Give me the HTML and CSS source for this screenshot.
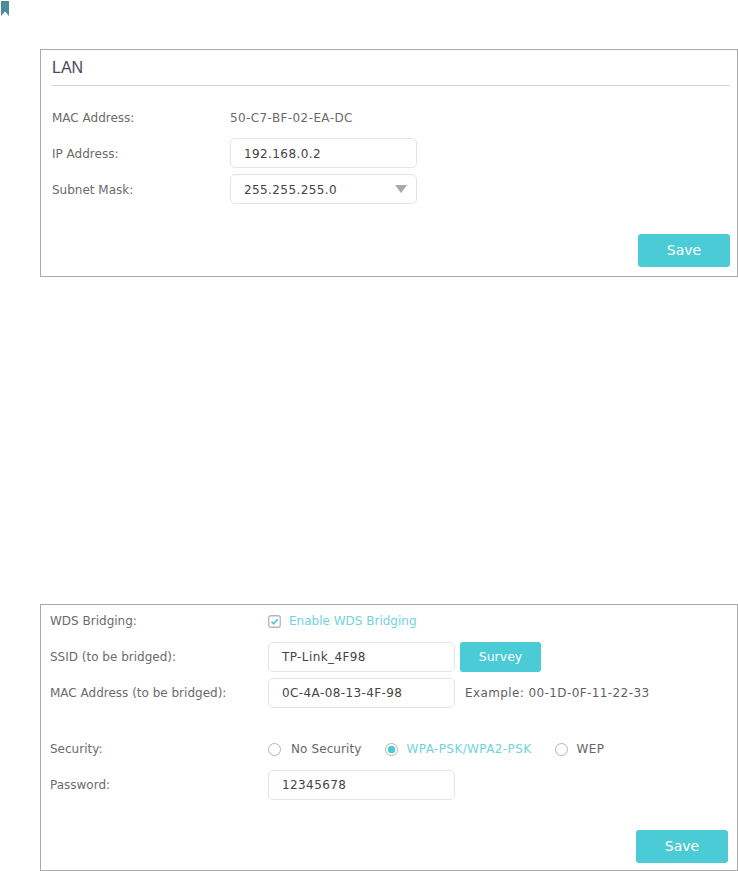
FILE: index.html
```html
<!DOCTYPE html>
<html lang="en">
<head>
<meta charset="utf-8">
<title>LAN and WDS Bridging</title>
<link rel="stylesheet" href="styles.css">
</head>
<body>
<svg class="bookmark" width="8" height="15" viewBox="0 0 8 15"><path d="M0 0H8V15L4 10.500L0 15Z" fill="#4a8c9c"/></svg>
<section class="card lan">
  <h2 class="title">LAN</h2>
  <div class="row first"><span class="label">MAC Address:</span><span class="value">50-C7-BF-02-EA-DC</span></div>
  <div class="row"><span class="label">IP Address:</span><span class="field">192.168.0.2</span></div>
  <div class="row"><span class="label">Subnet Mask:</span><span class="field select">255.255.255.0<i class="arrow"></i></span></div>
  <div class="actions"><button class="btn save">Save</button></div>
</section>
<section class="card wds">
  <div class="row check-row"><span class="label">WDS Bridging:</span>
    <span class="option on"><svg class="box" width="13" height="13" viewBox="0 0 13 13"><rect x=".75" y=".75" width="11.500" height="11.500" rx="2" fill="#fff" stroke="#b5b5b5" stroke-width="1.300"/><path d="M3.500 6.700L5.600 8.800L9.600 4.300" fill="none" stroke="#4acbd6" stroke-width="1.700"/></svg>Enable WDS Bridging</span></div>
  <div class="row"><span class="label">SSID (to be bridged):</span><span class="field">TP-Link_4F98</span><button class="btn survey">Survey</button></div>
  <div class="row"><span class="label">MAC Address (to be bridged):</span><span class="field">0C-4A-08-13-4F-98</span><span class="hint">Example: 00-1D-0F-11-22-33</span></div>
  <div class="row security"><span class="label">Security:</span>
    <span class="radios">
      <span class="option plain"><i class="radio"></i>No Security</span>
      <span class="option on wide"><i class="radio checked"></i>WPA-PSK/WPA2-PSK</span>
      <span class="option wide"><i class="radio"></i>WEP</span>
    </span></div>
  <div class="row"><span class="label">Password:</span><span class="field">12345678</span></div>
  <div class="actions"><button class="btn save">Save</button></div>
</section>
</body>
</html>
```
FILE: styles.css
```css
* { box-sizing: border-box; }
html, body { margin: 0; padding: 0; background: #fff; }
body {
  width: 738px;
  height: 871px;
  overflow: hidden;
  padding: 1px 0 0 1px;
  font-family: "DejaVu Sans", sans-serif;
  font-size: 12px;
  color: #6b6b6b;
}
.bookmark { display: block; }
.card {
  border: 1px solid #aaa;
  width: 698px;
  background: #fff;
}
.lan { margin: 33px 0 0 39px; height: 228px; padding: 0 7px 0 11px; }
.wds { margin: 327px 0 0 39px; height: 267px; padding: 0 9px 0 9px; }
.title {
  margin: 0;
  font: 400 16px/35px "Liberation Sans", sans-serif;
  color: #4a4a55;
  height: 36px;
  border-bottom: 1px solid #d4d4d4;
}
.row { display: flex; align-items: center; height: 30px; margin-bottom: 6px; }
.row.first { margin-top: 16px; }
.lan .label { width: 178px; padding-top: 1px; }
.wds .label { width: 218px; }
.label { flex: none; }
.value { color: #6b6b6b; letter-spacing: .4px; padding-top: 1px; }
.field {
  position: relative;
  display: flex;
  align-items: center;
  width: 187px;
  height: 30px;
  padding-left: 13px;
  border: 1px solid #e4e4e4;
  border-radius: 5px;
  color: #444;
  background: #fff;
  letter-spacing: .4px;
}
.lan .field { padding-top: 1px; }
.arrow {
  position: absolute;
  right: 9px;
  top: 10px;
  border-left: 6px solid transparent;
  border-right: 6px solid transparent;
  border-top: 8px solid #a9a9a9;
}
.actions { display: flex; justify-content: flex-end; margin-top: 30px; }
.btn {
  border: 0;
  border-radius: 3px;
  background: #4acbd6;
  color: #fff;
  font-family: inherit;
  padding: 0 0 2px;
}
.save { width: 92px; height: 33px; font-size: 14px; }
.survey { width: 81px; height: 30px; font-size: 12.500px; margin-left: 5px; }
.hint { margin-left: 10px; color: #5f5f5f; letter-spacing: .4px; }
.check-row { margin: 1px 0 6px; }
.option { display: inline-flex; align-items: center; color: #666; }
.option.on { color: #6fd3dc; }
.option.wide { letter-spacing: .4px; }
.option.plain { letter-spacing: .1px; }
.option.plain .radio { margin-right: 10px; }
.box { margin-right: 8px; }
.security { margin-top: 26px; }
.radios { display: flex; gap: 23px; }
.radio {
  width: 13px;
  height: 13px;
  margin-right: 9px;
  border: 1px solid #b5b5b5;
  border-radius: 50%;
  background: #fff;
}
.radio.checked { background: radial-gradient(circle, #4acbd6 0 3.500px, #fff 4px); }
```
